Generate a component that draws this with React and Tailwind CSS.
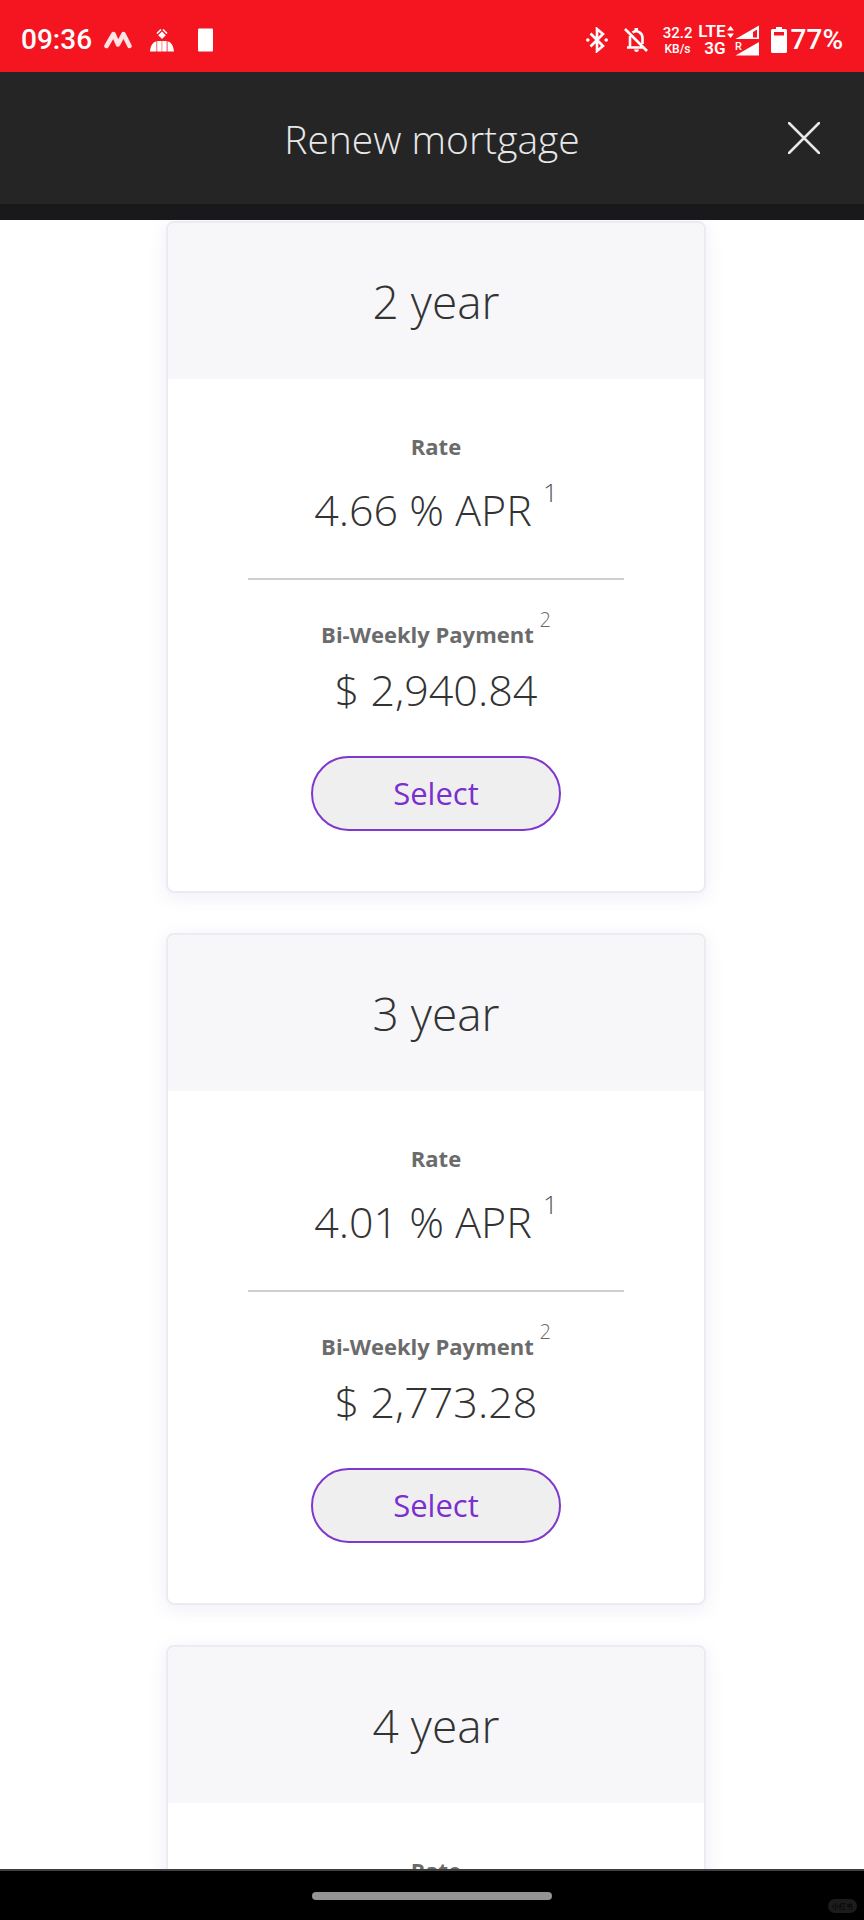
import { useState } from 'react';

const terms = [
  { years: 2, rate: '4.66', payment: '2,940.84' },
  { years: 3, rate: '4.01', payment: '2,773.28' },
  { years: 4, rate: '4.14', payment: '2,805.62' },
];

function StatusBar() {
  return (
    <div className="flex h-[72px] shrink-0 items-center justify-between bg-[#f51520] px-[21px] pt-2 font-['Roboto',sans-serif] font-medium text-white">
      <div className="flex items-center">
        <span className="text-[28px] leading-8">09:36</span>
        {/* Motorola-style wave */}
        <svg className="ml-3 h-6 w-7" viewBox="0 0 28 24" fill="none" stroke="currentColor" strokeWidth="4.500" strokeLinecap="round" strokeLinejoin="round">
          <path d="M2.500 18 9.500 6l4.500 10.500L19.500 6l6 12" strokeOpacity="0.88" />
        </svg>
        <svg className="ml-[18px] h-6 w-6" viewBox="0 0 24 24" fill="currentColor">
          <path d="m12 3.500 3.800 3.800L12 11 8.200 7.300z" />
          <path d="M7 5.500l4-4M13 1.500l4 4" stroke="currentColor" strokeWidth="1.700" />
          <path d="M0 23.500C.5 17.500 3 14 6.500 13.200V23.500zM7.200 13h4.500v10.500H7.200zM12.200 13h4.500v10.500h-4.500zM17.500 13.200C21 14 23.500 17.500 24 23.500h-6.500z" />
        </svg>
        <svg className="ml-6 h-6 w-[15px]" viewBox="0 0 15 24" fill="currentColor">
          <rect y="0.500" width="15" height="23" rx="1" />
        </svg>
      </div>
      <div className="flex items-center">
        <svg className="h-[26px] w-[22px]" viewBox="0 0 22 26" fill="none" stroke="currentColor" strokeWidth="2.600">
          <path d="M4.500 6.500 17 19l-6 5V2l6 5L4.500 19.500" />
          <circle cx="1.800" cy="13" r="1.800" fill="currentColor" stroke="none" />
          <circle cx="20.200" cy="13" r="1.800" fill="currentColor" stroke="none" />
        </svg>
        <svg className="ml-4 h-[26px] w-6" viewBox="0 0 24 26" fill="none" stroke="currentColor" strokeWidth="2.600">
          <path d="M1 2l22 22M3 20.500h16M6 20V9M8.500 5.500C13 2.500 18.500 5.500 18.500 11v6" />
          <path d="M10.500 1h3.500v3.500h-3.500zM10 22.500h5q-.5 2.500-2.500 2.500T10 22.500z" fill="currentColor" stroke="none" />
        </svg>
        <div className="ml-4 flex w-7 flex-col items-center">
          <span className="text-[15px] leading-[17px]">32.2</span>
          <span className="text-[12px] leading-[14px]">KB/s</span>
        </div>
        <div className="ml-[5px] flex w-[29px] flex-col items-end text-[17px] leading-[17px] font-semibold">
          <span>LTE</span>
          <span>3G</span>
        </div>
        <svg className="ml-px h-8 w-8" viewBox="0 0 32 32" fill="currentColor">
          <path d="m3.500 2 3.500 4.500H0zM0 9.500h7L3.500 14z" />
          <path fillRule="evenodd" d="M32 1.500v13.500H8.500zM30 5.500l-4 2.500v5.500h4z" />
          <path d="M32 18v13.500H8.500z" />
          <text x="8" y="26" fontSize="11">R</text>
        </svg>
        <svg className="ml-3 h-[26px] w-4" viewBox="0 0 16 26" fill="currentColor">
          <path fillRule="evenodd" d="M5 0h6v2h3.500q1.500 0 1.500 1.500v21q0 1.500-1.500 1.500h-13Q0 26 0 24.500v-21Q0 2 1.500 2H5zM3 5v3.500h10V5z" />
        </svg>
        <span className="ml-1 text-[28px] leading-8">77%</span>
      </div>
    </div>
  );
}

function TermCard({ term, selected, onSelect }) {
  return (
    <section className="w-full max-w-[540px] shrink-0 overflow-hidden rounded-lg border-2 border-[#ecebf3] bg-white text-center text-[#333] shadow-[0_4px_18px_rgba(90,90,190,0.1)]">
      <h2 className="bg-[#f7f6f8] pt-[46px] pb-[46px] text-[46px] leading-[64px] font-light">
        {term.years} year
      </h2>
      <div className="flex flex-col items-center px-20 pt-[51px] pb-[60px]">
        <h3 className="text-[22px] leading-8 font-bold text-[#6b6b6b]">Rate</h3>
        <p className="mt-4 text-[43px] leading-[64px] font-light">
          {term.rate} % APR <sup className="-top-6 text-[26px] leading-none text-[#555]">1</sup>
        </p>
        <hr className="mt-9 w-full border-t-2 border-[#cfcfcf]" />
        <h3 className="mt-[38px] text-[22px] leading-8 font-bold text-[#6b6b6b]">
          Bi-Weekly Payment <sup className="-top-4 text-xl leading-none font-light">2</sup>
        </h3>
        <p className="mt-2 text-[43px] leading-[64px] font-light">$ {term.payment}</p>
        <button
          type="button"
          aria-pressed={selected}
          onClick={onSelect}
          className="mt-[34px] h-[75px] w-[250px] rounded-full border-2 border-[#8038cc] bg-[#f0eff0] text-[31px] text-[#7b2fce]"
        >
          Select
        </button>
      </div>
    </section>
  );
}

function App() {
  const [selectedYears, setSelectedYears] = useState(null);

  return (
    <div className="flex h-screen flex-col overflow-hidden bg-white font-['Open_Sans',sans-serif]">
      <StatusBar />

      <header className="grid h-[148px] shrink-0 grid-cols-[1fr_auto_1fr] items-center border-b-16 border-[#19181a] bg-[#252526] px-11 text-[#e8e8e8]">
        <h1 className="col-start-2 pt-0.5 text-[39px] font-light">Renew mortgage</h1>
        <button type="button" aria-label="Close" className="justify-self-end">
          <svg className="h-8 w-8" viewBox="0 0 32 32" fill="none" stroke="currentColor" strokeWidth="2.500" strokeLinecap="round">
            <path d="M1 1l30 30M31 1 1 31" />
          </svg>
        </button>
      </header>

      <main className="flex min-h-0 flex-1 flex-col items-center gap-10 overflow-hidden pt-px pl-2">
        {terms.map((term) => (
          <TermCard
            key={term.years}
            term={term}
            selected={selectedYears === term.years}
            onSelect={() => setSelectedYears(term.years)}
          />
        ))}
      </main>

      {/* Gesture navigation bar */}
      <footer className="grid h-[51px] shrink-0 grid-cols-[1fr_240px_1fr] items-center border-t-2 border-[#3c413f] bg-black px-[7px]">
        <div className="col-start-2 h-2 rounded-full bg-[#959495]" />
        <span className="mt-5 justify-self-end rounded-full bg-[#1c1c1d] px-1 font-['Noto_Sans_CJK_SC',sans-serif] text-[7px] leading-[14px] text-black">
          小红书
        </span>
      </footer>
    </div>
  );
}

export default App;
